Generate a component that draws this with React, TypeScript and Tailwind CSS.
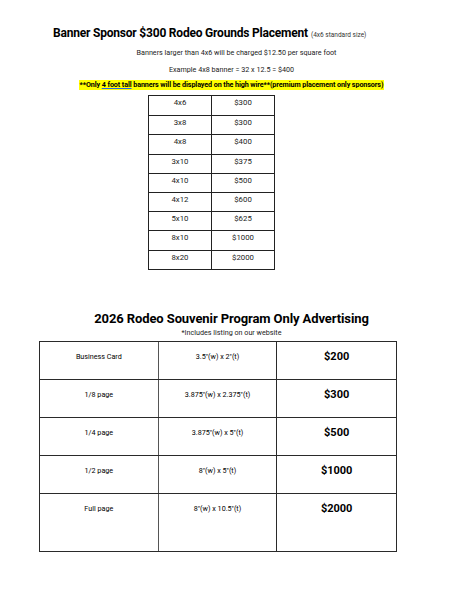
const banners = [
  ['4x6', '$300'],
  ['3x8', '$300'],
  ['4x8', '$400'],
  ['3x10', '$375'],
  ['4x10', '$500'],
  ['4x12', '$600'],
  ['5x10', '$625'],
  ['8x10', '$1000'],
  ['8x20', '$2000'],
];

const program = [
  { name: 'Business Card', size: '3.5"(w) x 2"(t)', price: '$200', h: 'h-[37px]' },
  { name: '1/8 page', size: '3.875"(w) x 2.375"(t)', price: '$300', h: 'h-[38px]' },
  { name: '1/4 page', size: '3.875"(w) x 5"(t)', price: '$500', h: 'h-[38px]' },
  { name: '1/2 page', size: '8"(w) x 5"(t)', price: '$1000', h: 'h-[38px]' },
  { name: 'Full page', size: '8"(w) x 10.5"(t)', price: '$2000', h: 'h-[58px]' },
];

export default function App() {
  return (
    <div className="w-[463px] h-[600px] bg-white text-black font-['Roboto','Liberation_Sans',Arial,sans-serif] overflow-hidden">
      {/* Banner section header */}
      <div className="pt-[25px] pl-[53px] flex items-baseline gap-[3px]">
        <span className="text-[12px] font-bold leading-[16px] tracking-[-0.2px]">Banner Sponsor $300 Rodeo Grounds Placement</span>
        <span className="text-[6.5px] text-[#333]">(4x6 standard size)</span>
      </div>
      <div className="mt-[7px] flex flex-col items-center text-[7.2px] text-[#222] leading-[9px]">
        <p className="pl-[10px]">Banners larger than 4x6 will be charged $12.50 per square foot</p>
        <p className="mt-[8px]">Example 4x8 banner = 32 x 12.5 = $400</p>
        <p className="mt-[6px] bg-[#ffff00] font-bold text-[7.2px] px-[1px] leading-[10px] text-black tracking-[-0.1px]">
          **Only <span className="underline decoration-[#2563eb] underline-offset-1">4 foot tall</span> banners will be displayed on the high wire**(premium placement only sponsors)
        </p>
      </div>

      {/* Banner size table */}
      <div className="mt-[5px] ml-[148px] w-[127px] border border-[#222]">
        {banners.map(([size, price], i) => (
          <div
            key={size}
            className={`grid grid-cols-[63px_1fr] h-[19.2px] text-[7.8px] leading-[10px] text-[#222] ${i > 0 ? 'border-t border-[#222]' : ''}`}
          >
            <div className="border-r border-[#222] text-center pt-[2px]">{size}</div>
            <div className="text-center pt-[2px]">{price}</div>
          </div>
        ))}
      </div>

      {/* Program section */}
      <div className="mt-[40px] text-center text-[13px] font-bold leading-[17px] tracking-[-0.1px]">2026 Rodeo Souvenir Program Only Advertising</div>
      <div className="mt-[1px] text-center text-[7.2px] text-[#222] leading-[9px]">*Includes listing on our website</div>
      <div className="mt-[4px] ml-[39px] w-[358px] border-[1.5px] border-[#2a2a2a]">
        {program.map((row, i) => (
          <div
            key={row.name}
            className={`grid grid-cols-3 ${row.h} ${i > 0 ? 'border-t-[1.5px] border-[#2a2a2a]' : ''}`}
          >
            <div className="border-r-[1.5px] border-[#555] text-center text-[7.2px] leading-[9px] pt-[10px]">{row.name}</div>
            <div className="border-r-[1.5px] border-[#2a2a2a] text-center text-[7.2px] leading-[9px] pt-[10px]">{row.size}</div>
            <div className="text-center text-[11px] leading-[13px] font-bold pt-[8px]">{row.price}</div>
          </div>
        ))}
      </div>
    </div>
  );
}
